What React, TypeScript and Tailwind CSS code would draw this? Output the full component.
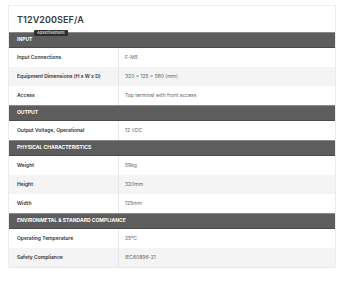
import React from 'react'

type Row = { label: string; value: string }
type Section = { title: string; rows: Row[] }

const sections: Section[] = [
  {
    title: 'INPUT',
    rows: [
      { label: 'Input Connections', value: 'F-M5' },
      { label: 'Equipment Dimensions (H x W x D)', value: '320 x 125 x 560 (mm)' },
      { label: 'Access', value: 'Top terminal with front access' },
    ],
  },
  {
    title: 'OUTPUT',
    rows: [{ label: 'Output Voltage, Operational', value: '12 VDC' }],
  },
  {
    title: 'PHYSICAL CHARACTERISTICS',
    rows: [
      { label: 'Weight', value: '59kg' },
      { label: 'Height', value: '320mm' },
      { label: 'Width', value: '125mm' },
    ],
  },
  {
    title: 'ENVIRONMETAL & STANDARD COMPLIANCE',
    rows: [
      { label: 'Operating Temperature', value: '25°C' },
      { label: 'Safety Compliance', value: 'IEC60896-21' },
    ],
  },
]

export default function App() {
  return (
    <div className="min-h-[283px] bg-white px-[8px] pt-[5px] font-['Inter','Liberation_Sans',sans-serif]">
      <div className="relative w-[328px] border border-[#ececec] border-b-0">
        {/* Title */}
        <div className="flex h-[26px] items-center pl-[8px] pt-[2px] text-[9px] font-semibold tracking-[0.1px] text-[#3a3a3a]">
          T12V200SEF/A
        </div>

        {sections.map((s) => (
          <div key={s.title}>
            <div className="flex h-[16px] items-center border-t border-[#8a8a8a] border-b border-b-[#4a4a4a] bg-[#5d5d5d] pl-[8px] text-[5px] font-bold text-white">
              {s.title}
            </div>
            {s.rows.map((r, i) => (
              <div
                key={r.label}
                className={
                  'flex h-[19px] items-center text-[5px] ' +
                  (i % 2 === 1 ? 'bg-[#f4f4f4]' : 'bg-white')
                }
              >
                <div className="flex h-full w-[110px] items-center border-r border-[#e6e6e6] pl-[8px] font-semibold text-[#333]">
                  {r.label}
                </div>
                <div className="pl-[6px] text-[#666]">{r.value}</div>
              </div>
            ))}
          </div>
        ))}
        <div className="border-b border-[#e6e6e6]" />

        {/* Ad label */}
        <div className="absolute left-[25px] top-[24px] flex h-[6px] items-center rounded-[1px] bg-[#2e2e2e] px-[3px] text-[4px] text-white">
          Advertisement
        </div>
      </div>
    </div>
  )
}
